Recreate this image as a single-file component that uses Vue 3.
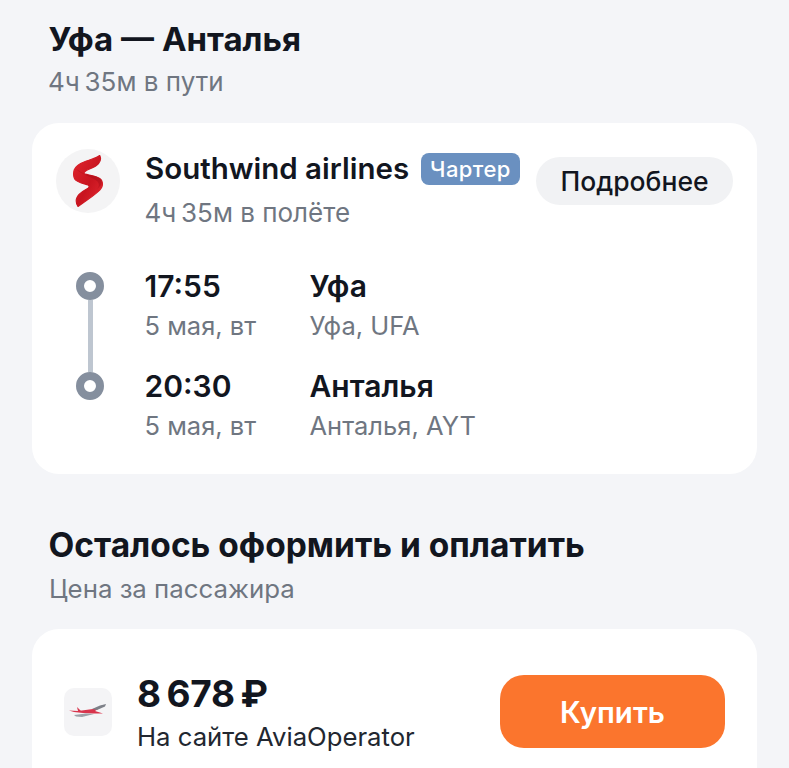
<script setup>
const points = [
  { time: '17:55', date: '5 мая, вт', city: 'Уфа', airport: 'Уфа, UFA' },
  { time: '20:30', date: '5 мая, вт', city: 'Анталья', airport: 'Анталья, AYT' },
]
</script>

<template>
  <main class="page">
    <header class="head">
      <h1>Уфа — Анталья</h1>
      <p class="sub">4ч&#8201;35м в пути</p>
    </header>

    <section class="card flight">
      <div class="carrier">
        <div class="logo">
          <svg width="30" height="52" viewBox="0 0 30 52">
            <defs>
              <linearGradient id="sGrad" x1="0" y1="0" x2="1" y2="1">
                <stop offset="0" stop-color="#e0262e"/>
                <stop offset="0.55" stop-color="#c8141f"/>
                <stop offset="1" stop-color="#e42a32"/>
              </linearGradient>
            </defs>
            <path d="M26.7 .5C28 3 27.6 6 25.5 8.5C22 12.7 15 14 11.7 16.7C10.8 17.5 10.7 18.7 12 19.2C17 20.5 25 20.5 28.4 25C30 28 29.6 31 28 33.5C25 38 19 41 13.4 45.5C10 48 7 50 5 51.5C3.5 49.5 3 46.5 3.4 44C4 40 9 36.5 15 33.2C16.5 32 16.5 30.7 15 30C11 28.7 4 27.5 1.7 24C.5 21.5 .3 18 1.2 15C2.5 10.5 8 8 13.4 6C18 4.2 24 3 26.7 .5Z" fill="url(#sGrad)" stroke="url(#sGrad)" stroke-width="1.2" stroke-linejoin="round"/>
            <path d="M3 14C8 19 19 22 24 26C27 29 26 32 24 34C27 31.5 29.5 29 28.4 25C25 20.5 17 20.5 12 19.2C9 18 7 16 3 14Z" fill="#a90f1a" opacity=".55"/>
          </svg>
        </div>
        <div class="carrier-text">
          <div class="name-row">
            <span class="name">Southwind airlines</span>
            <span class="badge">Чартер</span>
          </div>
          <div class="sub dur">4ч&#8201;35м в полёте</div>
        </div>
        <button class="more">Подробнее</button>
      </div>

      <div class="route">
        <div class="track">
          <span class="dot"></span>
          <span class="line"></span>
          <span class="dot"></span>
        </div>
        <div class="stops">
          <div v-for="p in points" :key="p.time" class="stop">
            <div class="col-time">
              <div class="big">{{ p.time }}</div>
              <div class="sub small">{{ p.date }}</div>
            </div>
            <div>
              <div class="big">{{ p.city }}</div>
              <div class="sub small">{{ p.airport }}</div>
            </div>
          </div>
        </div>
      </div>
    </section>

    <header class="head second">
      <h1>Осталось оформить и оплатить</h1>
      <p class="sub">Цена за пассажира</p>
    </header>

    <section class="card offer">
      <div class="agency">
        <svg width="38" height="16" viewBox="0 0 38 16">
          <path d="M0 6.5L9 7L24 5L32 3L26 7L34 9.5L24 9.5L14 9L5 8Z" fill="#d8344c"/>
          <path d="M23 5L31 1.5L37 0L36 2.5L28 6Z" fill="#7d8088"/>
          <path d="M5 11L17 9.5L25 10L13 13L7 12.5Z" fill="#9da1a8"/>
          <path d="M8 3L12 7L9 7Z" fill="#d8344c"/>
        </svg>
      </div>
      <div class="price-col">
        <div class="price">8&#8201;678&#8201;₽</div>
        <div class="site">На сайте AviaOperator</div>
      </div>
      <button class="buy">Купить</button>
    </section>
  </main>
</template>

<style scoped>
.page {
  width: 789px;
  height: 768px;
  overflow: hidden;
  box-sizing: border-box;
  background: #f4f5f8;
  padding: 21px 32px 0;
  font-family: Inter, "Noto Sans", sans-serif;
  color: #12161f;
}
.head { padding-left: 17px; }
h1 {
  margin: 0;
  font-size: 33px;
  line-height: 36px;
  font-weight: 700;
  margin-left: -0.5px;
}
.second h1 { font-size: 33.5px; }
.sub {
  margin: 0;
  color: #6f7681;
  font-size: 26px;
  line-height: 32px;
}
.head .sub { margin-top: 9px; margin-left: -1px; }
.card {
  background: #fff;
  border-radius: 27px;
}
.flight {
  margin-top: 25px;
  height: 351px;
  box-sizing: border-box;
  padding: 26px 24px 0 24px;
}
.carrier { display: flex; align-items: flex-start; }
.logo {
  width: 64px;
  height: 64px;
  border-radius: 50%;
  background: #f4f4f5;
  display: flex;
  align-items: center;
  justify-content: center;
  flex: none;
}
.carrier-text { margin-left: 25px; flex: 1; }
.name-row { display: flex; align-items: center; height: 38px; }
.name { font-size: 29.5px; font-weight: 600; }
.badge {
  margin-left: 12px;
  margin-top: 2px;
  background: #6a90c0;
  color: #fff;
  font-size: 22px;
  line-height: 32px;
  font-weight: 500;
  letter-spacing: 0.4px;
  padding: 0 9px;
  border-radius: 8px;
}
.dur { margin-top: 10px; margin-left: -0.5px; }
.more {
  margin-top: 8px;
  height: 48px;
  width: 197px;
  border: 0;
  border-radius: 24px;
  background: #f1f2f4;
  color: #12161f;
  font: 500 26.5px Inter, sans-serif;
  flex: none;
}
.route { display: flex; margin-top: 43px; }
.track {
  width: 30px;
  margin-left: 19px;
  display: flex;
  flex-direction: column;
  align-items: center;
}
.dot {
  width: 28px;
  height: 28px;
  box-sizing: border-box;
  border: 8px solid #858f9e;
  border-radius: 50%;
  background: #fff;
  flex: none;
}
.line { width: 5px; height: 72px; background: #bec6d0; }
.stops { margin-left: 40px; margin-top: -6px; margin-left: 39.5px; }
.stop { display: flex; height: 100px; }
.col-time { width: 165px; }
.big {
  font-size: 30px;
  line-height: 40px;
  font-weight: 600;
}
.small { line-height: 40px; font-size: 25.5px; }
.second { margin-top: 53px; }
.second .sub { margin-top: 10px; margin-left: 0; font-size: 25.8px; }
.offer {
  margin-top: 24px;
  height: 200px;
  box-sizing: border-box;
  padding: 44px 32px 0;
  display: flex;
  align-items: flex-start;
}
.agency {
  width: 48px;
  height: 48px;
  margin-top: 15px;
  border-radius: 10px;
  background: #f4f4f6;
  display: flex;
  align-items: center;
  justify-content: center;
  flex: none;
}
.price-col { margin-left: 25px; flex: 1; }
.price {
  font-size: 37px;
  line-height: 44px;
  font-weight: 700;
  letter-spacing: -0.2px;
  margin-top: -1px;
}
.site {
  font-size: 25.7px;
  line-height: 36px;
  margin-top: 3px;
  color: #222730;
}
.buy {
  width: 225px;
  height: 73px;
  border: 0;
  border-radius: 24px;
  background: #fb752d;
  color: #fff;
  font: 600 29.5px Inter, sans-serif;
  flex: none;
  margin-top: 2px;
}
</style>
